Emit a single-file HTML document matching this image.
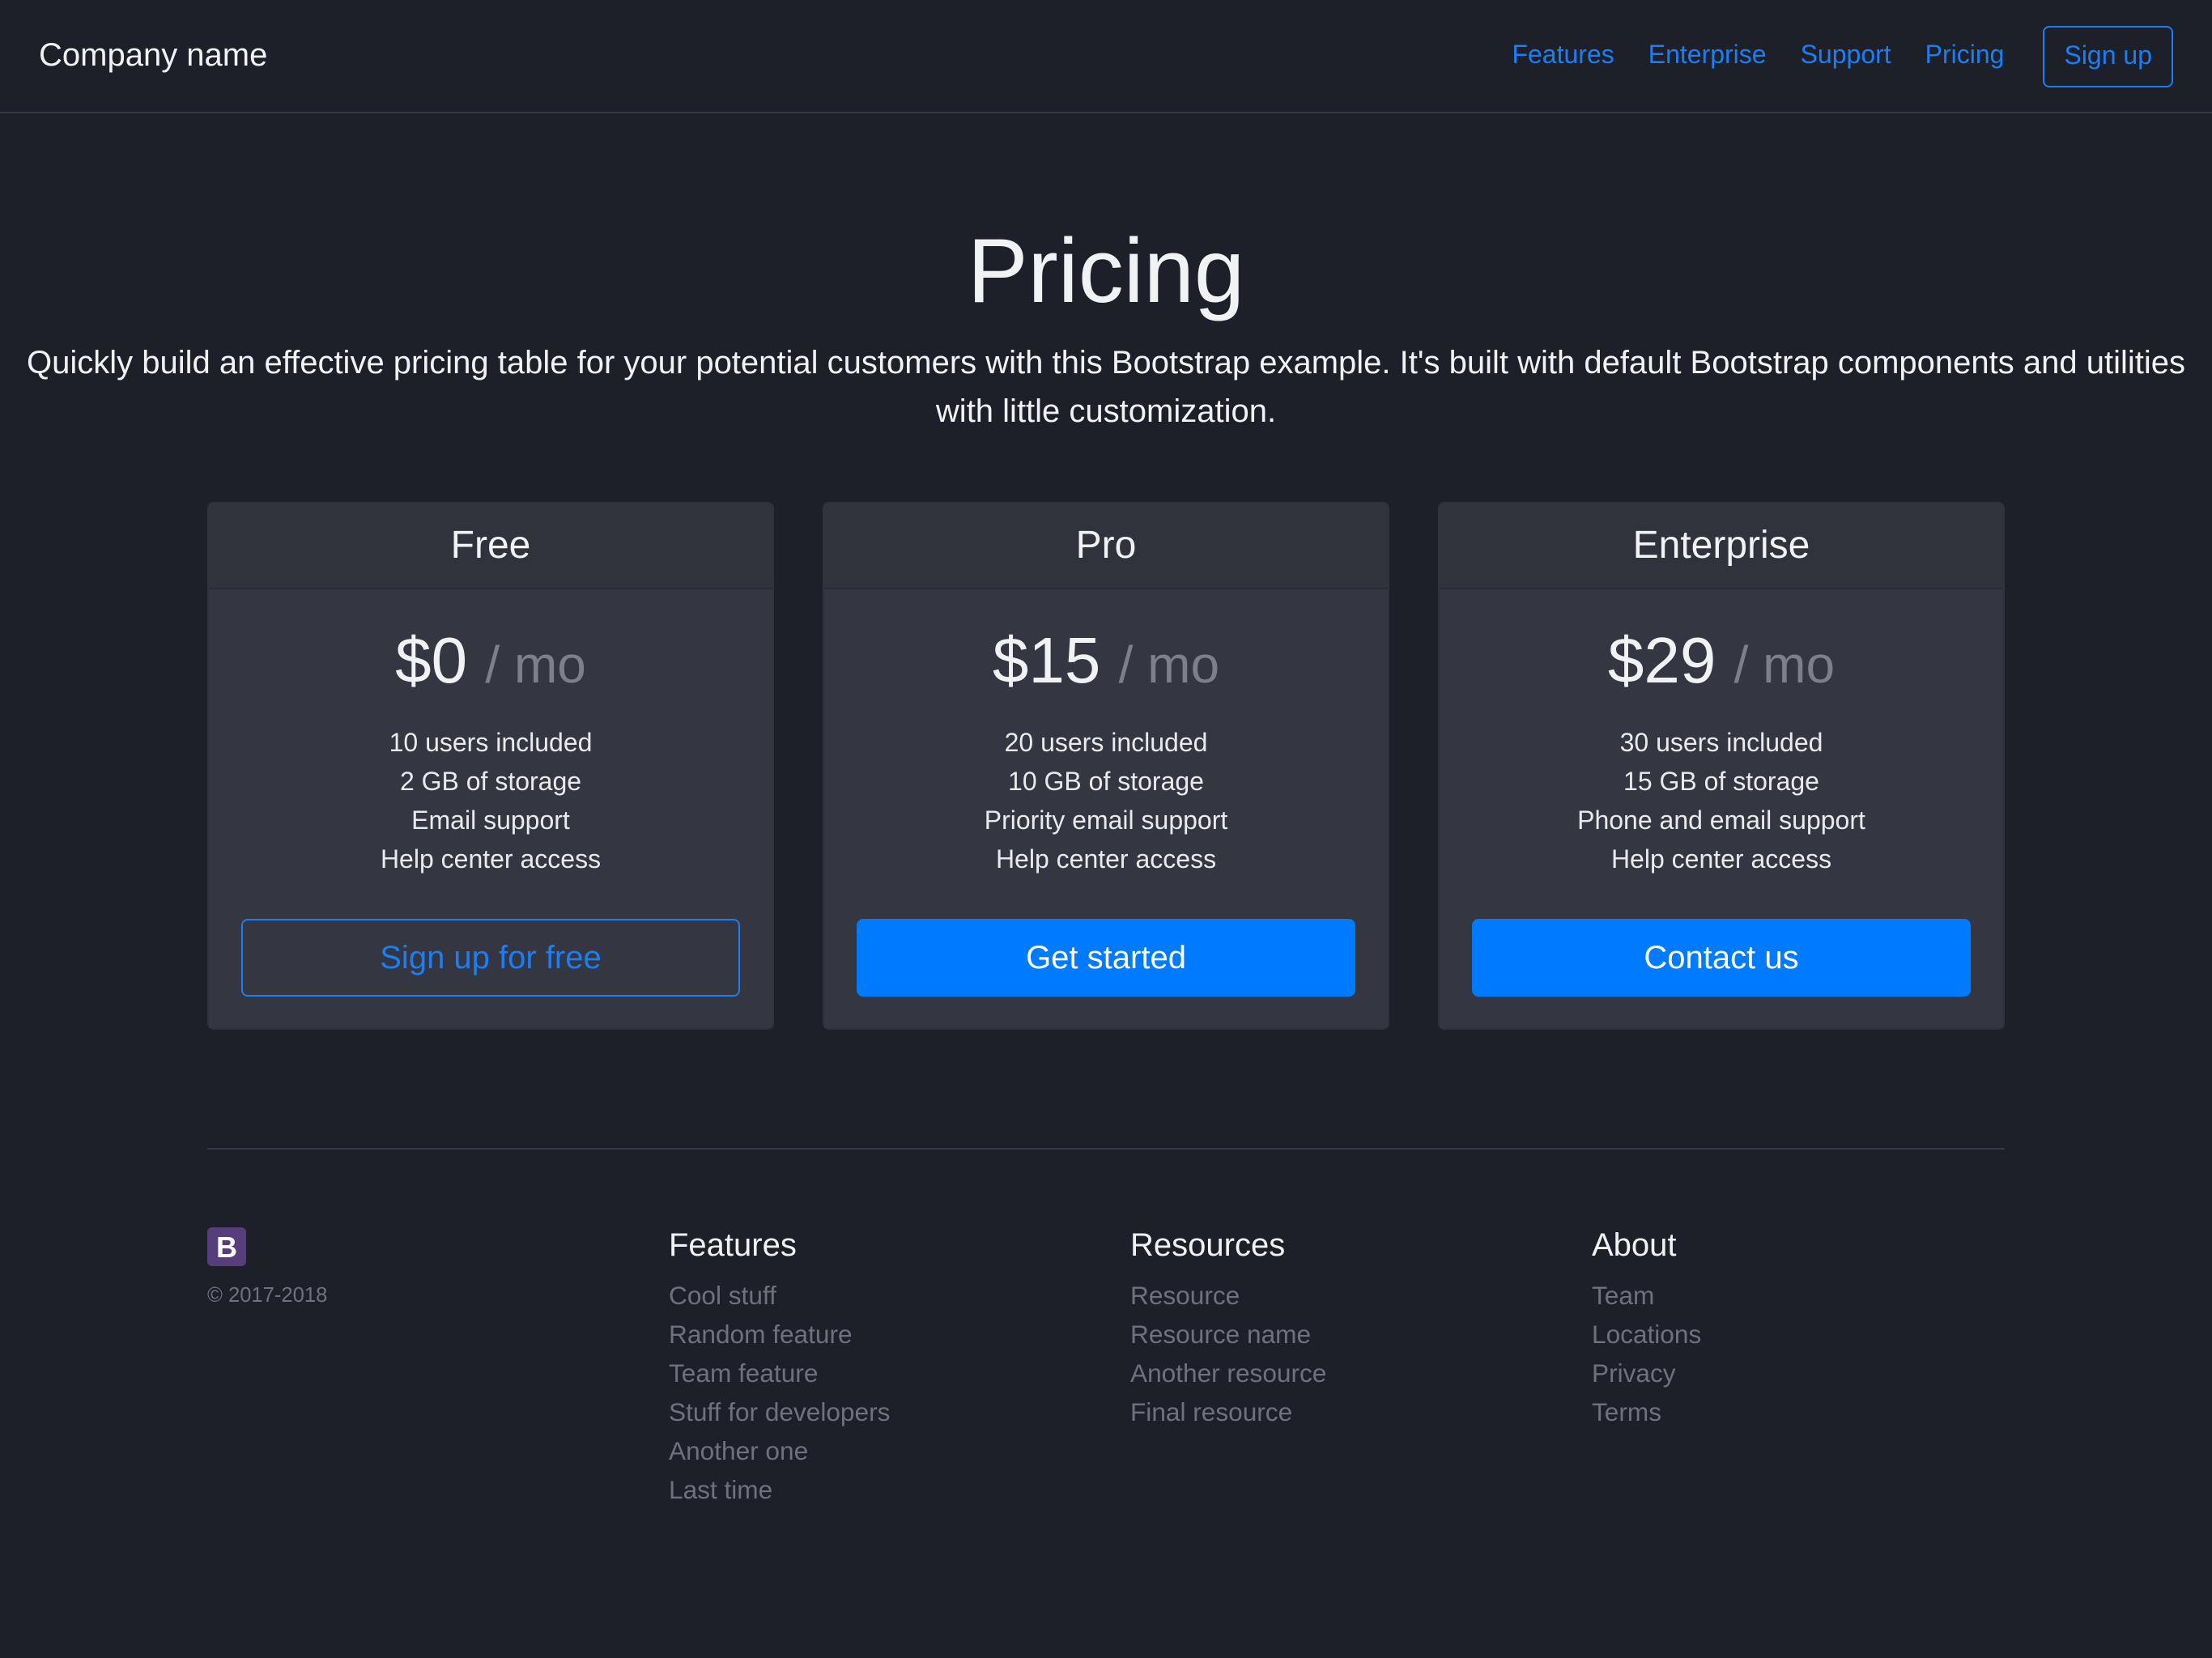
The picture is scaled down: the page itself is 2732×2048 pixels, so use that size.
<!DOCTYPE html>
<html><head><meta charset="utf-8">
<style>
html{zoom:2}
body{margin:0;width:1366px;height:1024px;background:#1e2029;color:#e9eaec;font-family:"Liberation Sans",Arial,sans-serif;font-size:16px;overflow:hidden}
*{box-sizing:border-box}
.nav{height:70px;border-bottom:1px solid #363944;position:relative}
.brand{position:absolute;left:24px;top:20px;font-size:20px;line-height:28px;color:#f1f2f4}
.links{position:absolute;right:24px;top:16px;display:flex;align-items:flex-start}
.links a{color:#1a7ff5;text-decoration:none;margin-right:21px;font-size:16px;line-height:35px}
.links .btn{margin-right:0;margin-left:3px;border:1px solid #1a7ff5;border-radius:4px;padding:0 12px;height:38px;line-height:34px}
h1.t{margin:64px 0 8px;text-align:center;font-size:56px;font-weight:300;line-height:67px;color:#f1f2f4}
.lead{text-align:center;font-size:20px;line-height:30px;font-weight:300;margin:0 16px;color:#f1f2f4}
.cards{position:absolute;top:310px;left:128px;width:1110px;display:flex;gap:30px}
.card{width:350px;height:326px;background:#343741;border-radius:4px;border:1px solid #30333c}
.ch{height:53px;background:#30333c;border-bottom:1px solid #2a2c34;text-align:center;font-size:24px;line-height:52px;color:#f1f2f4}
.cb{padding:20px;text-align:center}
.price{font-size:40px;line-height:48px;margin:0 0 12px;font-weight:400;color:#f1f2f4}
.price small{font-size:32px;color:#7b808a}
ul{list-style:none;margin:0;padding:0}
.cb li{line-height:24px;font-size:16px}
.b{display:block;margin-top:25px;height:48px;line-height:46px;border-radius:4px;font-size:20px;border:1px solid #1a7ff5}
.b.o{color:#1a7ff5}
.b.f{background:#007bff;color:#fff;border-color:#007bff}
.hr{position:absolute;top:709px;left:128px;width:1110px;border-top:1px solid #363944}
.fc{position:absolute;top:757px}
.fc h5{margin:0 0 7px;font-size:20px;line-height:24px;font-weight:400;color:#f1f2f4}
.fc li{line-height:24px;font-size:15.8px;color:#6c737c}
.logo{width:24px;height:24px;background:#563d7c;border-radius:3px;color:#fff;font-size:18px;font-weight:bold;text-align:center;line-height:25px;margin-top:1px}
.copy{font-size:12.8px;color:#6c737c;margin-top:11px}
</style></head><body>
<div class="nav"><div class="brand">Company name</div>
<div class="links"><a>Features</a><a>Enterprise</a><a>Support</a><a>Pricing</a><a class="btn">Sign up</a></div></div>
<h1 class="t">Pricing</h1>
<p class="lead">Quickly build an effective pricing table for your potential customers with this Bootstrap example. It's built with default Bootstrap components and utilities with little customization.</p>
<div class="cards">
<div class="card"><div class="ch">Free</div><div class="cb"><div class="price">$0 <small>/ mo</small></div><ul><li>10 users included</li><li>2 GB of storage</li><li>Email support</li><li>Help center access</li></ul><div class="b o">Sign up for free</div></div></div>
<div class="card"><div class="ch">Pro</div><div class="cb"><div class="price">$15 <small>/ mo</small></div><ul><li>20 users included</li><li>10 GB of storage</li><li>Priority email support</li><li>Help center access</li></ul><div class="b f">Get started</div></div></div>
<div class="card"><div class="ch">Enterprise</div><div class="cb"><div class="price">$29 <small>/ mo</small></div><ul><li>30 users included</li><li>15 GB of storage</li><li>Phone and email support</li><li>Help center access</li></ul><div class="b f">Contact us</div></div></div>
</div>
<div class="hr"></div>
<div class="fc" style="left:128px"><div class="logo">B</div><div class="copy">© 2017-2018</div></div>
<div class="fc" style="left:413px"><h5>Features</h5><ul><li>Cool stuff</li><li>Random feature</li><li>Team feature</li><li>Stuff for developers</li><li>Another one</li><li>Last time</li></ul></div>
<div class="fc" style="left:698px"><h5>Resources</h5><ul><li>Resource</li><li>Resource name</li><li>Another resource</li><li>Final resource</li></ul></div>
<div class="fc" style="left:983px"><h5>About</h5><ul><li>Team</li><li>Locations</li><li>Privacy</li><li>Terms</li></ul></div>
</body></html>
